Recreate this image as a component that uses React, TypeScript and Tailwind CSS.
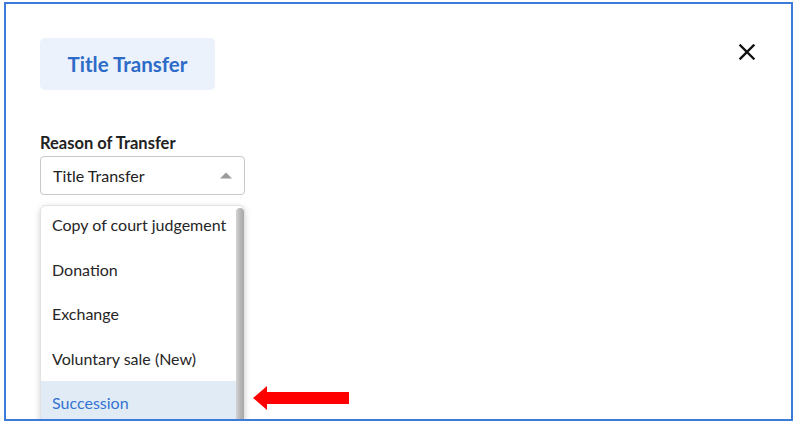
import React from "react";

const items = [
  "Copy of court judgement",
  "Donation",
  "Exchange",
  "Voluntary sale (New)",
  "Succession",
];

export default function App() {
  return (
    <div className="w-[800px] h-[426px] bg-white pl-[4px] pt-[2px]" style={{ fontFamily: "Lato, 'Open Sans', sans-serif" }}>
      <div className="relative w-[789px] h-[419px] border-2 border-[#3d7bd9] overflow-hidden bg-white">
        <div className="pl-[34px] pt-[34px] pr-[34px]">
          <div className="flex items-start justify-between">
            <div className="w-[175px] h-[52px] rounded-[5px] bg-[#ebf2fb] flex items-center justify-center text-[20.5px] font-bold text-[#2d6bc8]">
              Title Transfer
            </div>
            <svg width="16" height="16" viewBox="0 0 16 16" className="mt-[6px] mr-[2px]">
              <path d="M1.5 1.5 L14.5 14.5 M14.5 1.5 L1.5 14.5" stroke="#111" strokeWidth="2.4" strokeLinecap="square" />
            </svg>
          </div>
          <div className="mt-[44px] text-[16.5px] font-bold text-[#222] leading-[18px]">Reason of Transfer</div>
          <div className="relative mt-[4px] w-[205px]">
            <div className="h-[39px] border border-[#c9c9c9] rounded-[4px] flex items-center justify-between pl-[12px] pr-[12px] text-[16px] text-[#222]">
              <span>Title Transfer</span>
              <svg width="12" height="7" viewBox="0 0 12 7">
                <path d="M0 6.5 L6 0.5 L12 6.5 Z" fill="#9a9a9a" />
              </svg>
            </div>
            <div className="absolute left-0 top-[49px] w-[205px] h-[240px] bg-white rounded-t-[6px] border border-[#e2e2e2] shadow-[0_2px_6px_rgba(0,0,0,0.18)] flex overflow-hidden">
              <div className="flex-1 pt-[1px] -mt-[4px]">
                {items.map((t, i) => (
                  <div
                    key={t}
                    className={
                      "h-[44.5px] flex items-center pl-[11px] text-[16px] " +
                      (i === 4 ? "bg-[#e1ebf6] text-[#3373d2]" : "text-[#262626]")
                    }
                  >
                    {t}
                  </div>
                ))}
              </div>
              <div className="w-[8px] bg-gradient-to-r from-[#d4d4d4] via-[#b8b8b8] to-[#a8a8a8] rounded-t-[4px] mt-[2px]" />
            </div>
          </div>
        </div>
        <svg className="absolute left-[247px] top-[380px]" width="98" height="28" viewBox="0 0 98 28">
          <path d="M0 14 L14 2 L14 8 L96 8 L96 20 L14 20 L14 26 Z" fill="#ff0000" />
        </svg>
      </div>
    </div>
  );
}
